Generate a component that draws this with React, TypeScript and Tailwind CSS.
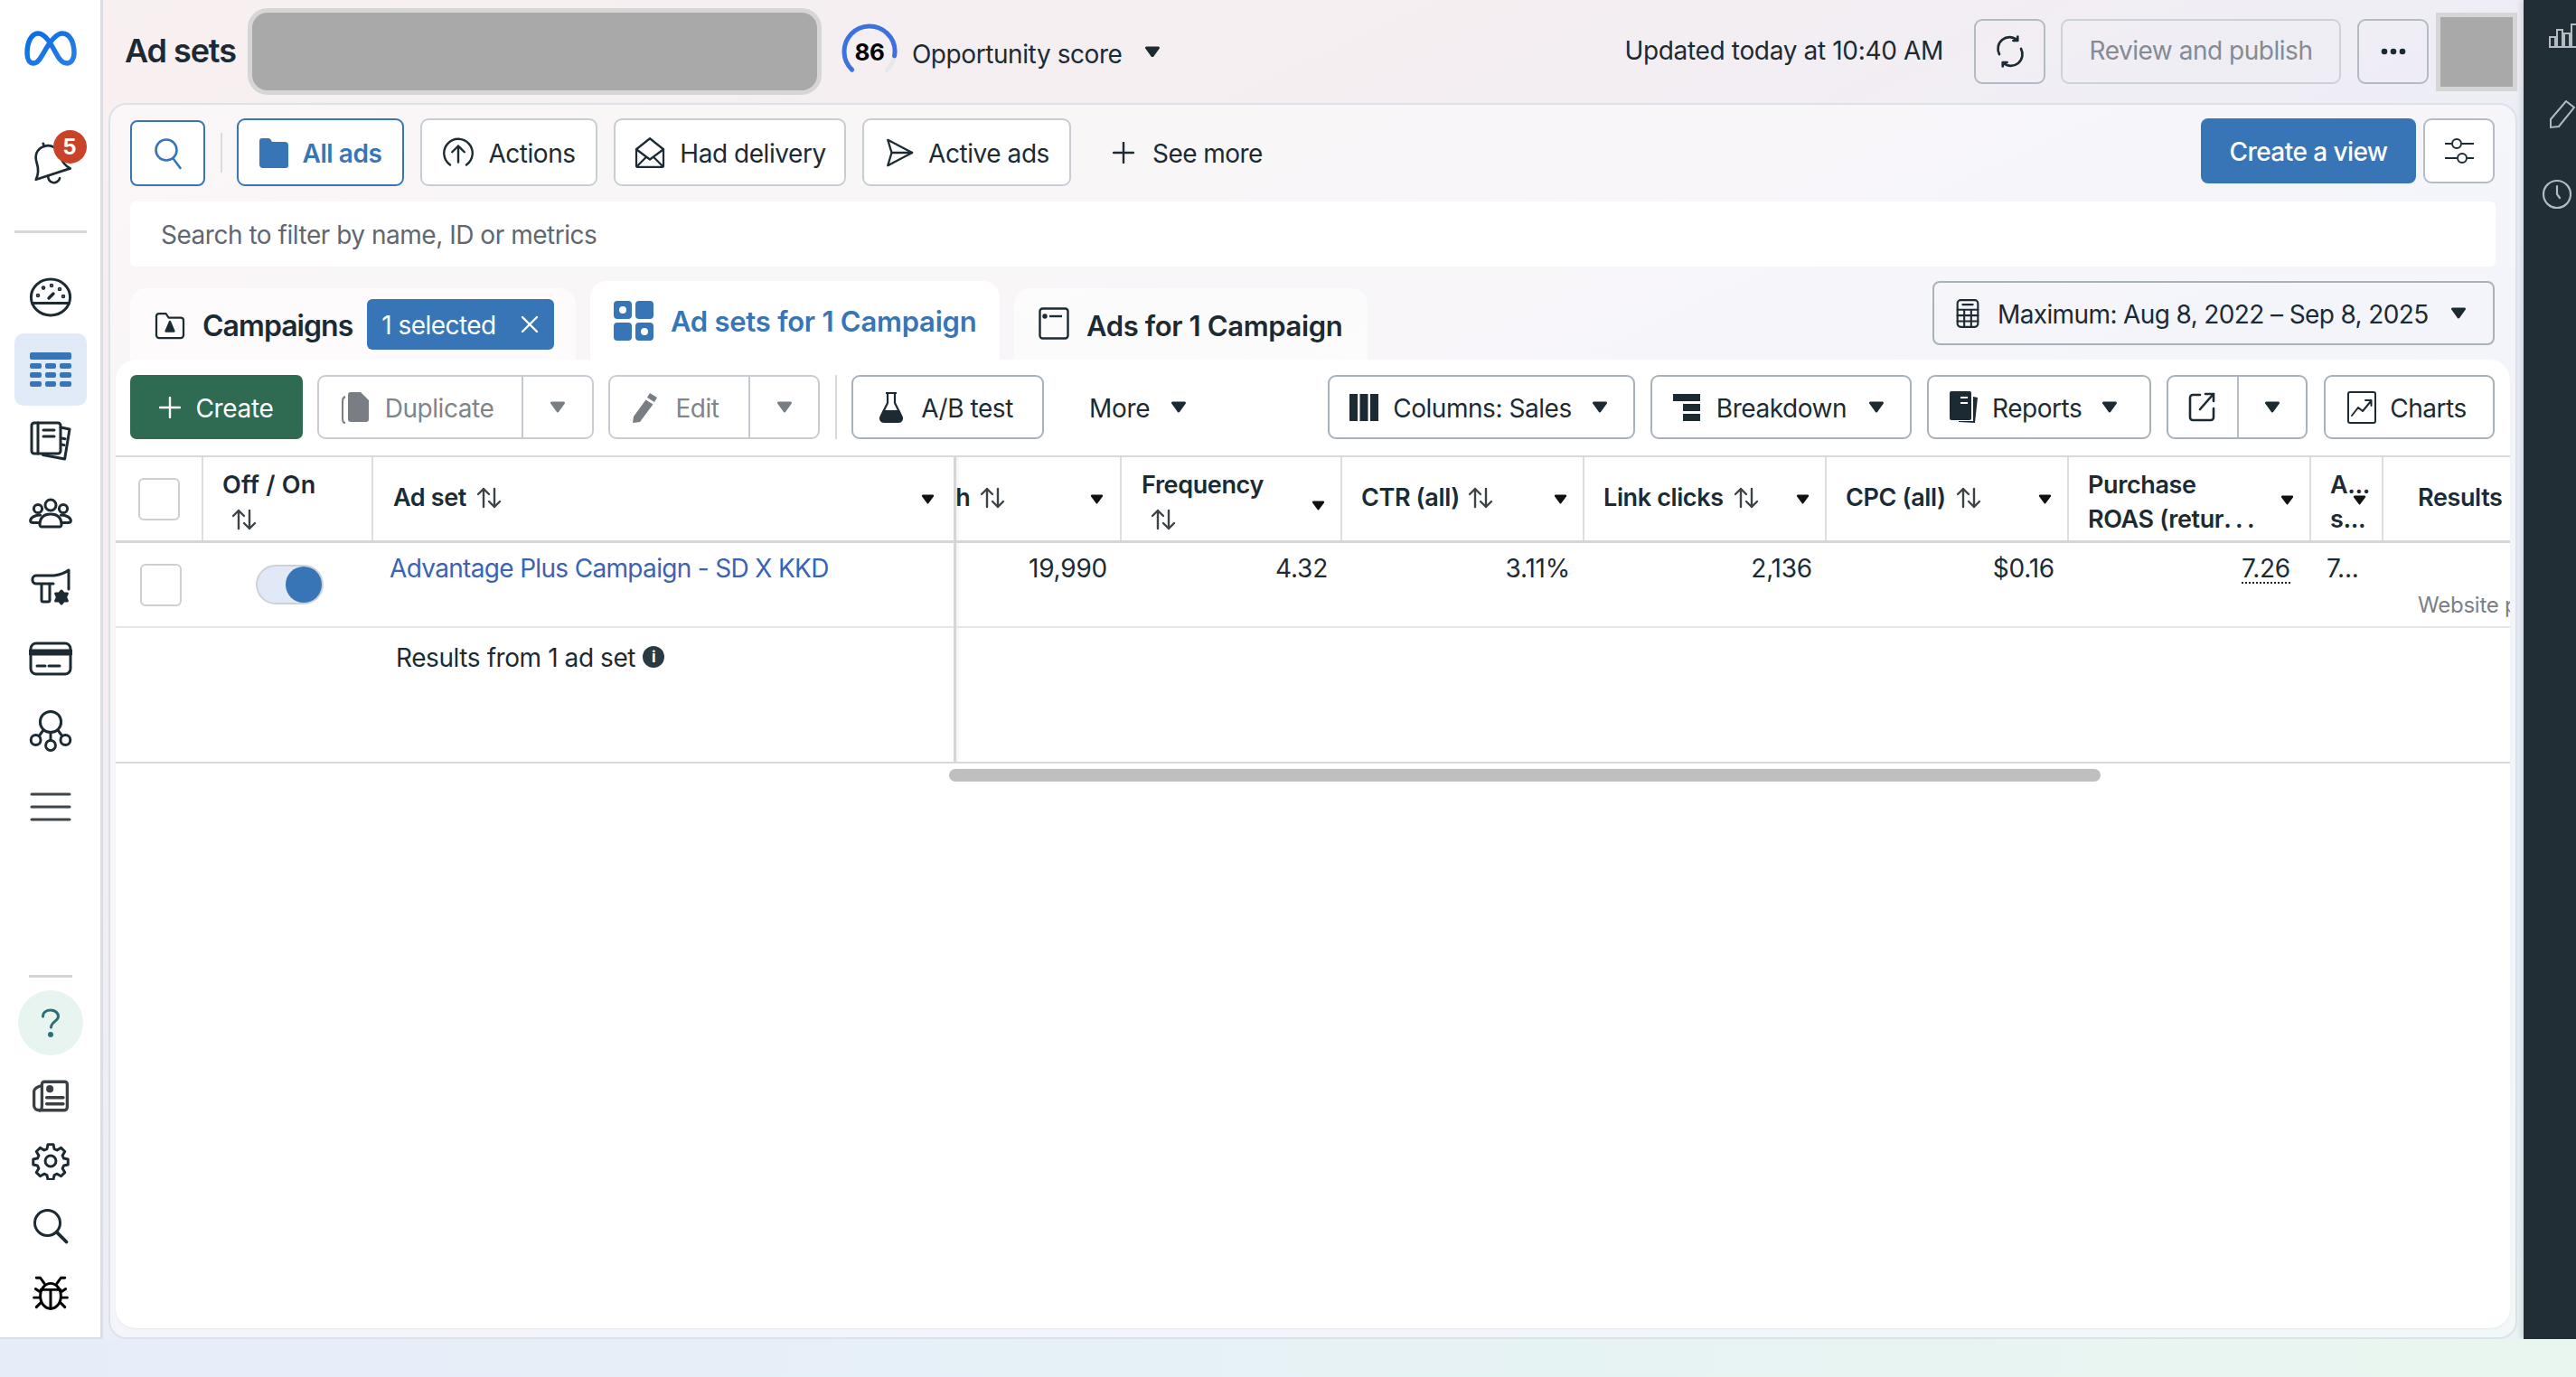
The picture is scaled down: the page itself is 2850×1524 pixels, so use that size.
import React from "react";

const ink = "#1c2b33";

function Caret({ className = "", color = ink, w = 18 }: { className?: string; color?: string; w?: number }) {
  return (
    <svg width={w} height={w * 0.72} viewBox="0 0 18 13" className={`shrink-0 ${className}`}>
      <path d="M2.500 2h13L9 11z" fill={color} stroke={color} strokeWidth="3" strokeLinejoin="round" />
    </svg>
  );
}

function Sort({ className = "" }: { className?: string }) {
  return (
    <svg width="30" height="24" viewBox="0 0 30 24" className={`shrink-0 ${className}`} fill="none" stroke="#3d4448" strokeWidth="2.400" strokeLinecap="round" strokeLinejoin="round">
      <path d="M9 22V2M3 8l6-6 6 6" />
      <path d="M21 2v20M15 16l6 6 6-6" />
    </svg>
  );
}

function I({ s = 46, h, vb = "0 0 24 24", sw = 1.7, c = ink, fill = "none", children }: { s?: number; h?: number; vb?: string; sw?: number; c?: string; fill?: string; children: React.ReactNode }) {
  return (
    <svg width={s} height={h ?? s} viewBox={vb} fill={fill} stroke={c} strokeWidth={sw} strokeLinecap="round" strokeLinejoin="round" className="shrink-0">
      {children}
    </svg>
  );
}

function L({ children, className = "" }: { children: React.ReactNode; className?: string }) {
  return <span className={`whitespace-nowrap pt-[2px] ${className}`}>{children}</span>;
}

function Btn({ children, className = "" }: { children: React.ReactNode; className?: string }) {
  return (
    <div className={`flex shrink-0 items-center rounded-[9px] border-2 bg-white text-[28px] tracking-[-0.016em] text-[#1c2b33] ${className}`}>
      {children}
    </div>
  );
}

function HeadCell({ w, children, className = "" }: { w: string; children: React.ReactNode; className?: string }) {
  return <div className={`relative h-full shrink-0 border-r-2 border-[#dcdee0] ${w} ${className}`}>{children}</div>;
}

function ValueCell({ w, children }: { w: string; children?: React.ReactNode }) {
  return <div className={`shrink-0 pt-[11px] text-[28px] leading-[34px] tracking-[-0.008em] text-[#1c2b33] ${w}`}>{children}</div>;
}

const headText = "whitespace-nowrap text-[27px] font-semibold leading-[38px] tracking-[-0.014em] text-[#1c2b33]";

function SideSlot({ children, className = "h-[80px]" }: { children: React.ReactNode; className?: string }) {
  return <div className={`flex w-[80px] shrink-0 items-center justify-center ${className}`}>{children}</div>;
}

export default function App() {
  return (
    <div className="flex h-[1524px] w-[2850px] flex-col overflow-hidden [font-family:Inter,sans-serif]">
      <div className="flex h-[1482px] shrink-0 bg-[linear-gradient(155deg,#f8f0f0_0%,#f4eef2_30%,#e9edf8_62%,#e6eef9_85%,#e8f3f2_100%)]">
        {/* Sidebar */}
        <aside className="flex h-full w-[114px] shrink-0 flex-col items-center border-b-2 border-r-[3px] border-[#dadfe6] bg-white">
          <div className="flex h-[108px] shrink-0 items-center justify-center">
            <svg width="60" height="42" viewBox="0 0 60 42" fill="none">
              <defs>
                <linearGradient id="mg" x1="0" y1="0" x2="1" y2="1">
                  <stop offset="0" stopColor="#0a6ce4" />
                  <stop offset="1" stopColor="#2a7fe8" />
                </linearGradient>
              </defs>
              <path d="M4 26C4 13 9 4 16 4c8 0 14 11 20 22 3 6 7 11 12 11 5 0 8-5 8-11C56 13 51 4 43 4 36 4 28 15 22 26 18 33 15 37 11 37 7 37 4 33 4 26Z" stroke="url(#mg)" strokeWidth="5.500" />
            </svg>
          </div>
          <div className="relative flex h-[144px] w-[80px] shrink-0 items-center justify-center pt-[6px]">
            <svg width="56" height="60" viewBox="0 0 24 27" fill="none" stroke={ink} strokeWidth="1.200" strokeLinejoin="round" strokeLinecap="round">
              <g transform="rotate(-18 12 14)">
                <path d="M12 3.500c4 0 6 3 6 6.500 0 4 1 6 3 8H3c2-2 3-4 3-8 0-3.500 2-6.500 6-6.500z" />
                <path d="M9.500 18a2.600 2.600 0 0 0 5 3" />
                <path d="M12 3.500V2" />
              </g>
            </svg>
            <div className="absolute left-[43px] top-[36px] flex h-[37px] w-[37px] items-center justify-center rounded-full bg-[#c9432a] text-[24px] font-bold text-white">5</div>
          </div>
          <div className="mt-[3px] h-[3px] w-[80px] shrink-0 bg-[#d5d9de]" />
          <div className="mt-[31px]" />
          <SideSlot>
            <I s={48} vb="0 0 24 24" sw={1.500}>
              <ellipse cx="12" cy="12" rx="10.800" ry="10" />
              <path d="M1.800 15.300h20.400" />
              <path d="M11 12.500l2.500-2.500" strokeWidth="1.700" />
              <circle cx="5" cy="11" r=".4" fill={ink} />
              <circle cx="8" cy="6.800" r=".4" fill={ink} />
              <circle cx="12.500" cy="5.500" r=".4" fill={ink} />
              <circle cx="17" cy="7.500" r=".4" fill={ink} />
              <circle cx="19" cy="11.500" r=".4" fill={ink} />
            </I>
          </SideSlot>
          <div className="flex h-[80px] w-[80px] shrink-0 items-center justify-center rounded-[10px] bg-[#e1ebf7]">
            <svg width="46" height="38" viewBox="0 0 46 38" fill="#3875b7">
              <rect x="0" y="0" width="46" height="8" rx="2" />
              <rect x="0" y="12" width="13" height="6" rx="2" /><rect x="17" y="12" width="12" height="6" rx="2" /><rect x="33" y="12" width="13" height="6" rx="2" />
              <rect x="0" y="22" width="13" height="6" rx="2" /><rect x="17" y="22" width="12" height="6" rx="2" /><rect x="33" y="22" width="13" height="6" rx="2" />
              <rect x="0" y="32" width="13" height="6" rx="2" /><rect x="17" y="32" width="12" height="6" rx="2" /><rect x="33" y="32" width="13" height="6" rx="2" />
            </svg>
          </div>
          <SideSlot>
            <I s={48} sw={1.500}>
              <rect x="1.500" y="1.500" width="16" height="17" rx="1.500" />
              <path d="M5 1.500v17M8 5.500h6M8 9h6" />
              <path d="M17.500 4l5 1-2.700 16.500-12-2.200" />
              <path d="M18 10l2 .4M18 13.500l1.500.3" />
            </I>
          </SideSlot>
          <SideSlot>
            <I s={48} sw={1.500}>
              <circle cx="12" cy="7" r="3" />
              <circle cx="5" cy="9" r="2.300" />
              <circle cx="19" cy="9" r="2.300" />
              <path d="M6 18c0-4 2-6 6-6s6 2 6 6c0 .5-.5 1-1 1H7c-.5 0-1-.5-1-1z" />
              <path d="M6.300 12.500C3 12.500 1 14 .800 15.500c0 .8.500 1.300 1.500 1.300h3.700M17.700 12.500c3.300 0 5.300 1.500 5.500 3 0 .8-.5 1.300-1.500 1.300H18" />
            </I>
          </SideSlot>
          <SideSlot>
            <I s={48} sw={1.500}>
              <path d="M22 3v10.500M22 3c-2 1.600-5 2.500-8 3H4c-1 0-2 .8-2 1.800v1c0 1 1 1.700 2 1.700h9.500" />
              <path d="M7 11v8.500c0 .6.400 1 1 1h2.500c.6 0 1-.4 1-1V11" />
              <path d="M18 14.500l1.200 1.500h2l-.9 2 .9 2h-2L18 21.500 16.800 20h-2l.9-2-.9-2h2z" fill={ink} />
            </I>
          </SideSlot>
          <SideSlot>
            <I s={48} sw={1.500}>
              <rect x="1" y="3.500" width="22" height="17" rx="3" />
              <path d="M1 8.500h22" strokeWidth="3.400" />
              <path d="M4.500 16h4.500M11 16h6" />
            </I>
          </SideSlot>
          <SideSlot>
            <I s={48} sw={1.500}>
              <circle cx="12" cy="7" r="5.800" />
              <circle cx="3.800" cy="17" r="2.700" />
              <circle cx="12" cy="20" r="2.700" />
              <circle cx="20.200" cy="17" r="2.700" />
              <path d="M12 13v4.300M8 11.500l-2.400 3.300M16 11.500l2.400 3.300" />
            </I>
          </SideSlot>
          <SideSlot className="mt-[4px] h-[80px]">
            <svg width="46" height="32" viewBox="0 0 46 32" stroke="#3f4549" strokeWidth="3" strokeLinecap="round">
              <path d="M2 2h42M2 16h42M2 30h42" />
            </svg>
          </SideSlot>
          <div className="flex-1" />
          <div className="h-[3px] w-[48px] shrink-0 bg-[#cfd5db]" />
          <div className="mt-[14px] flex h-[72px] w-[72px] shrink-0 items-center justify-center rounded-full bg-[#e8f4f0]">
            <svg width="22" height="32" viewBox="0 0 22 32" fill="none" stroke="#2c6f78" strokeWidth="3" strokeLinecap="round">
              <path d="M2.500 9C2.500 4.500 6 2 11 2s8.500 3 8.500 7c0 5-8 6-8 12" />
              <circle cx="11" cy="29" r="1.500" fill="#2c6f78" />
            </svg>
          </div>
          <div className="mt-[9px]" />
          <SideSlot className="h-[72px]">
            <I s={42} c="#3a4045" sw={1.900}>
              <path d="M5 21h15.500a2 2 0 0 0 2-2V4.500a1.500 1.500 0 0 0-1.500-1.500H8a1.500 1.500 0 0 0-1.500 1.500" />
              <path d="M5 21c-2 0-3.500-1-3.500-3V9c0-1.500 2-3 5-3.500" />
              <path d="M5 21c1 0 1.500-1.500 1.500-3V5" />
              <circle cx="11.500" cy="7.500" r="2.300" fill="#3a4045" stroke="none" />
              <path d="M9.500 13h10.500M9.500 17h10.500" />
            </I>
          </SideSlot>
          <SideSlot className="h-[72px]">
            <I s={42} sw={1.700}>
              <circle cx="12" cy="12" r="3.400" />
              <path d="M10.300 1.500h3.400l.6 2.800 1.800.8 2.500-1.500 2.400 2.400-1.500 2.500.8 1.800 2.700.6v3.400l-2.700.6-.8 1.800 1.500 2.500-2.400 2.400-2.500-1.500-1.800.8-.6 2.800h-3.400l-.6-2.800-1.800-.8-2.500 1.500-2.400-2.400 1.500-2.500-.8-1.800-2.700-.6v-3.400l2.700-.6.8-1.800-1.500-2.500 2.400-2.400 2.500 1.500 1.800-.8z" />
            </I>
          </SideSlot>
          <SideSlot className="h-[72px]">
            <I s={42} sw={1.700}>
              <circle cx="10" cy="10" r="8" />
              <path d="M15.800 15.800l6.200 6.200" strokeWidth="2.200" />
            </I>
          </SideSlot>
          <SideSlot className="mt-[1px] h-[72px]">
            <I s={42} c="#000" sw={1.700}>
              <ellipse cx="12" cy="14.500" rx="6.500" ry="8" />
              <path d="M5.800 10.500h12.400M12 10.500V22.500" />
              <path d="M8 6.500L5.500 3H3M16 6.500L18.500 3H21" />
              <path d="M5.500 12L2.500 10M5.500 15.500H1.500M6 18.500l-3 3M18.500 12l3-2M18.500 15.500h4M18 18.500l3 3" />
            </I>
          </SideSlot>
          <div className="h-[14px] shrink-0" />
        </aside>

        {/* Centre */}
        <div className="flex min-w-0 flex-1 flex-col pl-[6px] pr-[7px]">
          {/* Header */}
          <header className="flex h-[114px] shrink-0 items-center pl-[18px]">
            <div className="whitespace-nowrap pb-[2px] text-[36px] font-semibold tracking-[-0.03em] text-[#1c2b33]">Ad sets</div>
            <div className="ml-[13px] h-[96px] w-[635px] shrink-0 rounded-[22px] border-[5px] border-[#d6d6d6] bg-[#a9a9a9]" />
            <div className="relative ml-[22px] flex h-[64px] w-[62px] shrink-0 items-center justify-center">
              <svg width="62" height="64" viewBox="0 0 62 64" fill="none" className="absolute left-0 top-0">
                <circle cx="31" cy="32" r="28" stroke="#e7e7ec" strokeWidth="4.500" pathLength={360} strokeDasharray="38 322" transform="rotate(10 31 32)" strokeLinecap="round" />
                <circle cx="31" cy="32" r="28" stroke="#3b72dd" strokeWidth="5" pathLength={360} strokeDasharray="236 124" transform="rotate(134 31 32)" strokeLinecap="round" />
              </svg>
              <span className="relative text-[26px] font-bold tracking-[-0.02em] text-black">86</span>
            </div>
            <div className="ml-[16px] whitespace-nowrap pt-[6px] text-[28px] tracking-[-0.015em] text-[#1c2b33]">Opportunity score</div>
            <Caret className="ml-[24px]" />
            <div className="flex-1" />
            <div className="whitespace-nowrap pb-[2px] text-[28px] tracking-[-0.012em] text-[#1c2b33]">Updated today at 10:40 AM</div>
            <div className="ml-[34px] flex h-[72px] w-[79px] shrink-0 items-center justify-center rounded-[9px] border-2 border-[#b4bbc4]">
              <I s={36} sw={1.800}>
                <path d="M4 14a8.500 8.500 0 0 1 13-10.500" />
                <path d="M20 10a8.500 8.500 0 0 1-13 10.500" />
                <path d="M17.500 1v3h-3.200M6.500 23v-3h3.200" />
              </I>
            </div>
            <div className="ml-[17px] flex h-[72px] w-[310px] shrink-0 items-center justify-center whitespace-nowrap rounded-[9px] border-2 border-[#cdd2da] pb-[2px] text-[28px] tracking-[-0.017em] text-[#848b92]">Review and publish</div>
            <div className="ml-[18px] flex h-[72px] w-[79px] shrink-0 items-center justify-center rounded-[9px] border-2 border-[#b4bbc4]">
              <svg width="28" height="8" viewBox="0 0 28 8" fill={ink}>
                <circle cx="4" cy="4" r="3.300" /><circle cx="14" cy="4" r="3.300" /><circle cx="24" cy="4" r="3.300" />
              </svg>
            </div>
            <div className="ml-[8px] h-[87px] w-[90px] shrink-0 border-[5px] border-[#d6d6d6] bg-[#a9a9a9]" />
          </header>

          {/* Main panel */}
          <main className="flex min-h-0 flex-1 flex-col rounded-[20px] border-2 border-[#dde1e8] bg-white/45">
            <div className="flex items-start pl-[22px] pr-[23px] pt-[15px]">
              <div className="mt-[2px] flex h-[73px] w-[83px] shrink-0 items-center justify-center rounded-[8px] border-2 border-[#3875b7] bg-white">
                <svg width="32" height="36" viewBox="0 0 32 36" fill="none" stroke="#3875b7" strokeWidth="2.600" strokeLinecap="round">
                  <circle cx="14" cy="14" r="11.500" />
                  <path d="M22 24l7.500 10" />
                </svg>
              </div>
              <div className="ml-[17px] mt-[16px] h-[44px] w-[2px] shrink-0 bg-[#d9dde2]" />
              <Btn className="ml-[16px] h-[75px] w-[185px] justify-center gap-[16px] border-[#3875b7] font-semibold">
                <svg width="32" height="36" viewBox="0 0 32 36" fill="#3875b7" className="shrink-0">
                  <path d="M0 5a3 3 0 0 1 3-3h7a3 3 0 0 1 2.500 1.500L14 6h14a4 4 0 0 1 4 4v22a3 3 0 0 1-3 3H4a4 4 0 0 1-4-4z" />
                </svg>
                <L className="text-[#3875b7]">All ads</L>
              </Btn>
              <Btn className="ml-[18px] h-[75px] w-[196px] justify-center gap-[15px] border-[#c9cdd3]">
                <I s={36} sw={1.600}>
                  <path d="M6 21a10.500 10.500 0 1 1 12 0" />
                  <path d="M12 19V7M7.500 11.500L12 7l4.500 4.500" />
                </I>
                <L>Actions</L>
              </Btn>
              <Btn className="ml-[18px] h-[75px] w-[257px] justify-center gap-[15px] border-[#c9cdd3]">
                <I s={36} sw={1.500}>
                  <path d="M3 22.500h18c.6 0 1-.4 1-1V9.500L12 1.500 2 9.500v12c0 .6.400 1 1 1z" />
                  <path d="M2 9.500l10 7.500 10-7.500M2.500 22l7-7M21.500 22l-7-7" />
                </I>
                <L>Had delivery</L>
              </Btn>
              <Btn className="ml-[18px] h-[75px] w-[231px] justify-center gap-[15px] border-[#c9cdd3]">
                <I s={34} sw={1.600}>
                  <path d="M3 2l19 10L3 22l3-10z" />
                  <path d="M6 12h16" />
                </I>
                <L>Active ads</L>
              </Btn>
              <div className="ml-[46px] flex h-[75px] items-center gap-[20px] text-[28px] tracking-[-0.02em] text-[#1c2b33]">
                <svg width="24" height="24" viewBox="0 0 24 24" stroke={ink} strokeWidth="2.400" strokeLinecap="round" className="shrink-0">
                  <path d="M12 1v22M1 12h22" />
                </svg>
                <L>See more</L>
              </div>
              <div className="flex-1" />
              <div className="flex h-[72px] w-[238px] shrink-0 items-center justify-center whitespace-nowrap rounded-[8px] bg-[#3875b7] pt-[2px] text-[28px] font-medium tracking-[-0.02em] text-white">Create a view</div>
              <Btn className="ml-[8px] h-[72px] w-[79px] justify-center border-[#b6bcc4] bg-transparent">
                <svg width="34" height="28" viewBox="0 0 34 28" fill="none" stroke={ink} strokeWidth="2">
                  <path d="M1 6h7M20 6h13M1 22h13M26 22h7" />
                  <circle cx="14" cy="6" r="5" />
                  <circle cx="20" cy="22" r="5" />
                </svg>
              </Btn>
            </div>

            <div className="mx-[22px] mt-[17px] flex h-[72px] shrink-0 items-center rounded-[6px] bg-white pl-[34px] pt-[2px] text-[28px] tracking-[-0.017em] text-[#606770]">Search to filter by name, ID or metrics</div>

            {/* Tabs */}
            <div className="mt-[16px] flex h-[87px] shrink-0 items-end pl-[22px] pr-[23px]">
              <div className="flex h-[79px] w-[493px] shrink-0 items-start rounded-t-[18px] bg-white/60 pl-[26px] pt-[12px]">
                <div className="flex h-[56px] items-center">
                  <I s={36} sw={1.500}>
                    <path d="M2 6a2 2 0 0 1 2-2h5l2 3h9a2 2 0 0 1 2 2v11a2 2 0 0 1-2 2H4a2 2 0 0 1-2-2z" />
                    <path d="M12 10l3 7H9z" fill={ink} />
                  </I>
                  <span className="ml-[18px] pt-[4px] text-[32px] font-semibold tracking-[-0.03em] text-[#1c2b33]">Campaigns</span>
                  <div className="ml-[16px] flex h-[56px] w-[207px] shrink-0 items-center justify-between rounded-[6px] bg-[#3875b7] pl-[16px] pr-[17px] text-[28px] tracking-[-0.02em] text-white">
                    <L>1 selected</L>
                    <svg width="20" height="20" viewBox="0 0 20 20" stroke="#fff" strokeWidth="2.400" strokeLinecap="round" className="shrink-0"><path d="M2 2l16 16M18 2L2 18" /></svg>
                  </div>
                </div>
              </div>
              <div className="ml-[16px] flex h-[87px] w-[453px] shrink-0 items-start rounded-t-[18px] bg-white pl-[26px] pt-[22px]">
                <svg width="44" height="44" viewBox="0 0 44 44" fill="#3875b7" className="shrink-0">
                  <path fillRule="evenodd" d="M4 0h12a4 4 0 0 1 4 4v12a4 4 0 0 1-4 4H4a4 4 0 0 1-4-4V4a4 4 0 0 1 4-4zm6 6a4 4 0 1 0 0 8 4 4 0 0 0 0-8z" />
                  <rect x="24" y="0" width="20" height="20" rx="4" />
                  <rect x="0" y="24" width="20" height="20" rx="4" />
                  <path fillRule="evenodd" d="M28 24h12a4 4 0 0 1 4 4v12a4 4 0 0 1-4 4H28a4 4 0 0 1-4-4V28a4 4 0 0 1 4-4zm6 6a4 4 0 1 0 0 8 4 4 0 0 0 0-8z" />
                </svg>
                <span className="ml-[19px] whitespace-nowrap pt-[1px] text-[31px] font-semibold leading-[44px] tracking-[-0.008em] text-[#3875b7]">Ad sets for 1 Campaign</span>
              </div>
              <div className="ml-[16px] flex h-[79px] w-[391px] shrink-0 items-start rounded-t-[18px] bg-white/60 pl-[27px] pt-[21px]">
                <svg width="34" height="36" viewBox="0 0 34 36" fill="none" stroke={ink} strokeWidth="2.400" className="shrink-0">
                  <rect x="1.500" y="1.500" width="31" height="33" rx="3" />
                  <path d="M12 10h14" /><circle cx="7" cy="10" r="1.500" fill={ink} />
                </svg>
                <span className="ml-[19px] whitespace-nowrap pt-[3px] text-[31px] font-semibold leading-[36px] tracking-[-0.012em] text-[#1c2b33]">Ads for 1 Campaign</span>
              </div>
              <div className="flex-1" />
              <div className="mb-[16px] flex h-[71px] w-[622px] shrink-0 items-center rounded-[8px] border-2 border-[#a9b1ba] pl-[20px] text-[28px] tracking-[-0.022em] text-[#1c2b33]">
                <I s={34} sw={1.500}>
                  <rect x="4" y="1.500" width="16" height="21" rx="2.500" />
                  <path d="M8 5h8M4 9h16M4 13.500h16M4 18h16M9.300 9v13.500M14.700 9v13.500" />
                </I>
                <L className="ml-[16px]">Maximum: Aug 8, 2022 – Sep 8, 2025</L>
                <Caret className="ml-[24px]" />
              </div>
            </div>

            {/* Table card */}
            <section className="mx-[6px] mb-[10px] flex min-h-0 flex-1 flex-col overflow-hidden rounded-[22px] bg-white shadow-[0_1px_2px_rgba(0,0,0,0.06)]">
              <div className="mt-[17px] flex h-[71px] shrink-0 items-center pl-[16px] pr-[17px]">
                <div className="flex h-[71px] w-[191px] shrink-0 items-center justify-center gap-[16px] rounded-[7px] bg-[#2f6b52] text-[28px] tracking-[-0.012em] text-white">
                  <svg width="24" height="24" viewBox="0 0 24 24" stroke="#fff" strokeWidth="2.400" strokeLinecap="round" className="shrink-0"><path d="M12 1v22M1 12h22" /></svg>
                  <L>Create</L>
                </div>
                <Btn className="ml-[16px] h-[71px] w-[306px] border-[#c9cdd3]">
                  <div className="flex h-full w-[226px] items-center justify-center gap-[16px] border-r-2 border-[#c4c9cf] pr-[6px]">
                    <svg width="32" height="36" viewBox="0 0 32 36" fill="#787e83" className="shrink-0">
                      <path d="M10 1h11l9 9v21a3 3 0 0 1-3 3H10a3 3 0 0 1-3-3V4a3 3 0 0 1 3-3z" />
                      <path d="M4 6C1 7 1 9 1 11v19c0 3 1 5 3 5" fill="none" stroke="#787e83" strokeWidth="2" />
                    </svg>
                    <L className="text-[#7e858b]">Duplicate</L>
                  </div>
                  <div className="flex flex-1 items-center justify-center"><Caret color="#787e83" /></div>
                </Btn>
                <Btn className="ml-[16px] h-[71px] w-[234px] border-[#c9cdd3]">
                  <div className="flex h-full w-[155px] items-center justify-center gap-[18px] border-r-2 border-[#c4c9cf] pr-[8px]">
                    <svg width="30" height="34" viewBox="0 0 30 34" fill="#787e83" className="shrink-0">
                      <path d="M20 1l8 5-3 5-8-5zM15.500 8.500l8 5L9 33l-8 1 1-7z" />
                    </svg>
                    <L className="text-[#7e858b]">Edit</L>
                  </div>
                  <div className="flex flex-1 items-center justify-center"><Caret color="#787e83" /></div>
                </Btn>
                <div className="ml-[17px] h-[71px] w-[2px] shrink-0 bg-[#d5d8dc]" />
                <Btn className="ml-[16px] h-[71px] w-[213px] justify-center gap-[19px] border-[#a9b1ba] pr-[4px]">
                  <svg width="28" height="36" viewBox="0 0 28 36" fill="none" stroke={ink} strokeWidth="2.200" className="shrink-0">
                    <path d="M8 2h12M10 2v11L2.500 28c-1.500 3 .5 6 3.500 6h16c3 0 5-3 3.500-6L18 13V2" />
                    <path d="M5 21h18l3.500 8c.5 2-1 5-3.500 5H5c-2.500 0-4-3-3.500-5z" fill={ink} stroke="none" />
                  </svg>
                  <L>A/B test</L>
                </Btn>
                <div className="ml-[50px] flex items-center text-[28px] tracking-[-0.012em] text-[#1c2b33]">
                  <L>More</L>
                  <Caret className="ml-[23px]" />
                </div>
                <div className="flex-1" />
                <Btn className="h-[71px] w-[340px] justify-center gap-[16px] border-[#a9b1ba] pr-[6px]">
                  <svg width="32" height="32" viewBox="0 0 32 32" fill={ink} className="shrink-0">
                    <rect x="0" y="1" width="9" height="30" /><rect x="11.500" y="1" width="9" height="30" /><rect x="23" y="1" width="9" height="30" />
                  </svg>
                  <L>Columns: Sales</L>
                  <Caret className="ml-[6px]" />
                </Btn>
                <Btn className="ml-[17px] h-[71px] w-[289px] justify-center gap-[18px] border-[#a9b1ba] pr-[5px]">
                  <svg width="30" height="30" viewBox="0 0 30 30" fill={ink} className="shrink-0">
                    <rect x="0" y="0" width="30" height="8" /><rect x="11" y="11" width="19" height="8" /><rect x="11" y="22" width="19" height="8" />
                  </svg>
                  <L>Breakdown</L>
                  <Caret className="ml-[6px]" />
                </Btn>
                <Btn className="ml-[17px] h-[71px] w-[248px] justify-start gap-[16px] border-[#a9b1ba] pl-[22px]">
                  <svg width="32" height="36" viewBox="0 0 32 36" fill={ink} className="shrink-0">
                    <path fillRule="evenodd" d="M3 0h20a2 2 0 0 1 2 2v28a2 2 0 0 1-2 2H3a2 2 0 0 1-2-2V2a2 2 0 0 1 2-2zm10 6v2h8V6zm0 6v2h8v-2z" />
                    <path d="M27 6l5 1-3 28-18-1v-1h16z" />
                  </svg>
                  <L>Reports</L>
                  <Caret className="ml-[6px]" />
                </Btn>
                <Btn className="ml-[17px] h-[71px] w-[156px] border-[#a9b1ba]">
                  <div className="flex h-full w-[78px] items-center justify-center border-r-2 border-[#b6bcc4] pr-[2px]">
                    <svg width="30" height="34" viewBox="0 0 30 34" fill="none" stroke={ink} strokeWidth="2.600" strokeLinecap="round">
                      <path d="M13 3H5a3 3 0 0 0-3 3v22a3 3 0 0 0 3 3h20a3 3 0 0 0 3-3V18" />
                      <path d="M13 19L27 3M19 2h9v8" />
                    </svg>
                  </div>
                  <div className="flex flex-1 items-center justify-center"><Caret /></div>
                </Btn>
                <Btn className="ml-[18px] h-[71px] w-[189px] justify-center gap-[15px] border-[#a9b1ba] pr-[5px]">
                  <svg width="32" height="36" viewBox="0 0 32 36" fill="none" stroke={ink} strokeWidth="2" strokeLinecap="round" strokeLinejoin="round" className="shrink-0">
                    <rect x="1" y="1" width="30" height="34" rx="2" />
                    <path d="M5 27l7-9 5 4 9-11M20 10h6.500v6" />
                  </svg>
                  <L>Charts</L>
                </Btn>
              </div>

              {/* Table */}
              <div className="mt-[18px] flex h-[341px] shrink-0 border-b-2 border-t-2 border-[#d8d9db]">
                {/* Frozen columns */}
                <div className="flex w-[930px] shrink-0 flex-col border-r-[3px] border-[#d4d6d8]">
                  <div className="flex h-[95px] shrink-0 border-b-[3px] border-[#d4d6d8]">
                    <HeadCell w="w-[97px]" className="flex items-center justify-center">
                      <div className="h-[47px] w-[46px] rounded-[6px] border-2 border-[#ccd0d5] bg-white" />
                    </HeadCell>
                    <HeadCell w="w-[188px]" className="pl-[21px] pt-[12px]">
                      <div className="whitespace-nowrap text-[27px] font-semibold leading-[38px] tracking-[0.008em] text-[#1c2b33]">Off / On</div>
                      <Sort className="ml-[9px] mt-[7px]" />
                    </HeadCell>
                    <div className="relative flex h-full flex-1 items-center pb-[2px] pl-[22px]">
                      <span className={headText}>Ad set</span>
                      <Sort className="ml-[10px]" />
                      <Caret w={15} color="#111" className="absolute right-[21px] top-[41px]" />
                    </div>
                  </div>
                  <div className="flex h-[94px] shrink-0 border-b-2 border-[#e4e5e7]">
                    <div className="flex w-[98px] shrink-0 justify-center pl-[1px] pt-[23px]">
                      <div className="h-[47px] w-[46px] rounded-[6px] border-2 border-[#ccd0d5] bg-white" />
                    </div>
                    <div className="w-[187px] shrink-0 pl-[57px] pt-[24px]">
                      <div className="flex h-[44px] w-[75px] items-center justify-end rounded-full border-2 border-[#cdd2d8] bg-[#e0e9f5]">
                        <div className="h-[40px] w-[40px] rounded-full bg-[#3875b7]" />
                      </div>
                    </div>
                    <div className="flex-1 whitespace-nowrap pl-[18px] pt-[11px] text-[28px] leading-[34px] tracking-[-0.024em] text-[#3a62b5]">Advantage Plus Campaign - SD X KKD</div>
                  </div>
                  <div className="flex flex-1 items-start whitespace-nowrap pl-[310px] pt-[15px] text-[28px] leading-[36px] tracking-[-0.015em] text-[#1c2b33]">
                    Results from 1 ad set
                    <div className="ml-[8px] mt-[5px] flex h-[24px] w-[24px] items-center justify-center rounded-full bg-[#2a3a42] text-[17px] font-bold leading-none text-white">i</div>
                  </div>
                </div>

                {/* Scrolling columns */}
                <div className="flex min-w-0 flex-1 flex-col overflow-hidden shadow-[inset_6px_0_4px_-4px_rgba(0,0,0,0.06)]">
                  <div className="flex h-[95px] shrink-0 border-b-[3px] border-[#d4d6d8]">
                    <HeadCell w="w-[183px]" className="flex items-center justify-start overflow-hidden pb-[2px]">
                      <div className="-ml-[64px] flex items-center">
                        <span className={headText}>Reach</span>
                        <Sort className="ml-[10px]" />
                      </div>
                      <Caret w={15} color="#111" className="absolute right-[18px] top-[41px]" />
                    </HeadCell>
                    <HeadCell w="w-[244px]" className="pl-[22px] pt-[12px]">
                      <div className={headText}>Frequency</div>
                      <Sort className="ml-[9px] mt-[7px]" />
                      <Caret w={15} color="#111" className="absolute right-[17px] top-[48px]" />
                    </HeadCell>
                    <HeadCell w="w-[268px]" className="flex items-center pb-[2px] pl-[21px]">
                      <span className={headText}>CTR (all)</span>
                      <Sort className="ml-[8px]" />
                      <Caret w={15} color="#111" className="absolute right-[17px] top-[41px]" />
                    </HeadCell>
                    <HeadCell w="w-[268px]" className="flex items-center pb-[2px] pl-[21px]">
                      <span className={headText}>Link clicks</span>
                      <Sort className="ml-[10px]" />
                      <Caret w={15} color="#111" className="absolute right-[17px] top-[41px]" />
                    </HeadCell>
                    <HeadCell w="w-[268px]" className="flex items-center pb-[2px] pl-[21px]">
                      <span className={headText}>CPC (all)</span>
                      <Sort className="ml-[10px]" />
                      <Caret w={15} color="#111" className="absolute right-[17px] top-[41px]" />
                    </HeadCell>
                    <HeadCell w="w-[268px]" className="pl-[21px] pt-[12px]">
                      <div className={headText}>Purchase</div>
                      <div className={headText}>ROAS (retur<span className="tracking-[0.16em]">...</span></div>
                      <Caret w={15} color="#111" className="absolute right-[17px] top-[42px]" />
                    </HeadCell>
                    <HeadCell w="w-[80px]" className="pl-[21px] pt-[12px]">
                      <div className={headText}>A...</div>
                      <div className={headText}>s...</div>
                      <Caret w={15} color="#111" className="absolute right-[17px] top-[42px]" />
                    </HeadCell>
                    <div className="flex h-full flex-1 items-center overflow-hidden pb-[2px] pl-[38px]">
                      <span className={headText}>Results</span>
                    </div>
                  </div>
                  <div className="flex h-[94px] shrink-0 border-b-2 border-[#e4e5e7]">
                    <ValueCell w="w-[183px] pr-[16px] text-right">19,990</ValueCell>
                    <ValueCell w="w-[244px] pr-[16px] text-right">4.32</ValueCell>
                    <ValueCell w="w-[268px] pr-[16px] text-right">3.11%</ValueCell>
                    <ValueCell w="w-[268px] pr-[16px] text-right">2,136</ValueCell>
                    <ValueCell w="w-[268px] pr-[16px] text-right">$0.16</ValueCell>
                    <ValueCell w="w-[268px] pr-[23px] text-right">
                      <span className="underline decoration-dotted decoration-2 underline-offset-[5px]">7.26</span>
                    </ValueCell>
                    <ValueCell w="w-[80px] pl-[17px] text-left">7...</ValueCell>
                    <div className="flex-1 overflow-hidden whitespace-nowrap pl-[38px] pt-[54px] text-[24px] leading-[30px] tracking-[-0.01em] text-[#7a8087]">Website purchases</div>
                  </div>
                  <div className="flex-1" />
                </div>
              </div>

              {/* Scrollbar */}
              <div className="ml-[922px] mt-[6px] h-[14px] w-[1274px] shrink-0 rounded-full bg-[#bfbfbf]" />
            </section>
          </main>
        </div>

        {/* Right dark rail */}
        <aside className="flex h-full w-[58px] shrink-0 flex-col overflow-hidden bg-[#212e36] pl-[28px] pt-[25px] shadow-[-3px_0_6px_rgba(0,0,0,0.1)]">
          <svg width="34" height="28" viewBox="0 0 34 28" fill="none" stroke="#b3bac0" strokeWidth="2" className="shrink-0">
            <rect x="1" y="16" width="6" height="11" /><rect x="9" y="8" width="6" height="19" /><rect x="17" y="12" width="6" height="15" /><rect x="25" y="2" width="7" height="25" />
          </svg>
          <svg width="32" height="32" viewBox="0 0 32 32" fill="none" stroke="#b3bac0" strokeWidth="2" className="ml-[-1px] mt-[58px] shrink-0">
            <path d="M3 21L20 1l9 7L12 29l-9 1z" />
          </svg>
          <svg width="34" height="34" viewBox="0 0 34 34" fill="none" stroke="#b3bac0" strokeWidth="2.200" strokeLinecap="round" className="ml-[-8px] mt-[55px] shrink-0">
            <circle cx="17" cy="17" r="15" /><path d="M17 8v9l3 4" />
          </svg>
        </aside>
      </div>
      <div className="h-[42px] shrink-0 bg-[linear-gradient(90deg,#e7ecf9_0%,#e6f0f8_35%,#e6f3f3_60%,#e9f6ef_100%)]" />
    </div>
  );
}
